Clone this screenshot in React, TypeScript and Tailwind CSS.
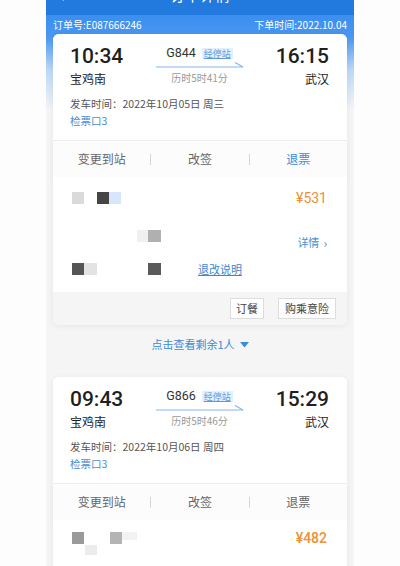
import React from "react";

const cjk = "font-['Noto_Sans_CJK_SC',sans-serif]";

type Trip = {
  dep: string;
  arr: string;
  from: string;
  to: string;
  train: string;
  duration: string;
  date: string;
  gate: string;
  refundBlue: boolean;
};

function Arrow() {
  return (
    <svg width="88" height="7" viewBox="0 0 88 7" className="block">
      <line x1="0" y1="6" x2="87" y2="6" stroke="#86b6ea" strokeWidth="1.2" />
      <line x1="87" y1="6" x2="79" y2="1.5" stroke="#86b6ea" strokeWidth="1.2" />
    </svg>
  );
}

function TripTop({ trip }: { trip: Trip }) {
  return (
    <div className="h-[106px] bg-white pl-[17px] pr-[18px] pt-[9px] rounded-t-[6px]">
      <div className="flex items-start justify-between">
        <div className="flex flex-col">
          <span className="font-['Roboto',sans-serif] text-[21px] leading-[26px] font-medium text-[#1f1f1f]">
            {trip.dep}
          </span>
          <span className={`${cjk} mt-[2px] text-[12px] leading-[16px] text-[#222]`}>{trip.from}</span>
        </div>
        <div className="flex flex-col items-center pt-[3px]">
          <div className="flex items-center gap-[6px]">
            <span className="font-['Roboto',sans-serif] text-[12.5px] leading-[14px] text-[#333]">{trip.train}</span>
            <span className={`${cjk} bg-[#e4effc] px-[2px] text-[9px] leading-[11px] text-[#5a9bdc] underline`}>
              经停站
            </span>
          </div>
          <div className="mt-[1px] -mr-[1px]">
            <Arrow />
          </div>
          <span className={`${cjk} mt-[3px] text-[10px] leading-[13px] text-[#999]`}>{trip.duration}</span>
        </div>
        <div className="flex flex-col items-end">
          <span className="font-['Roboto',sans-serif] text-[21px] leading-[26px] font-medium text-[#1f1f1f]">
            {trip.arr}
          </span>
          <span className={`${cjk} mt-[2px] text-[12px] leading-[16px] text-[#222]`}>{trip.to}</span>
        </div>
      </div>
      <div className={`${cjk} mt-[9px] text-[10.5px] leading-[16px] text-[#555]`}>发车时间：{trip.date}</div>
      <div className={`${cjk} mt-[1px] text-[10.5px] leading-[16px] text-[#4a8fd0]`}>{trip.gate}</div>
    </div>
  );
}

function ActionRow({ refundBlue }: { refundBlue: boolean }) {
  return (
    <div className={`${cjk} flex h-[37px] items-center border-t border-[#eeeeee] bg-[#fcfcfc] text-[12px] text-[#666] shadow-[0_2px_3px_rgba(0,0,0,0.04)]`}>
      <div className="flex-1 text-center">变更到站</div>
      <div className="h-[11px] w-px bg-[#d6d6d6]" />
      <div className="flex-1 text-center">改签</div>
      <div className="h-[11px] w-px bg-[#d6d6d6]" />
      <div className={`flex-1 text-center ${refundBlue ? "text-[#3b8bd6]" : ""}`}>退票</div>
    </div>
  );
}

function Block({ c, w = 12, h = 12 }: { c: string; w?: number; h?: number }) {
  return <div className={`shrink-0 ${c}`} style={{ width: w, height: h }} />;
}

function PassengerOne() {
  return (
    <>
      <div className="bg-white pl-[19px] pr-[20px] pt-[15px] pb-[17px]">
        <div className="flex h-[12px] items-center">
          <Block c="bg-[#dadada]" />
          <div className="w-[13px]" />
          <Block c="bg-[#454545]" />
          <Block c="bg-[#d6e6fb]" />
          <span className="ml-auto font-['Roboto',sans-serif] text-[14px] leading-none text-[#ee9034]">¥531</span>
        </div>
        <div className="mt-[26px] flex items-start">
          <div className="w-[65px]" />
          <Block c="bg-[#f0f0f0]" w={11} />
          <Block c="bg-[#b0b0b0]" w={13} />
          <span className={`${cjk} ml-auto mt-[6px] flex items-center gap-[4px] text-[11px] leading-[13px] text-[#4a8fd0]`}>
            详情<span className="text-[12px] leading-[12px]">›</span>
          </span>
        </div>
        <div className="mt-[14px] flex items-center">
          <Block c="bg-[#555]" />
          <Block c="bg-[#e3e3e3]" w={13} />
          <div className="w-[51px]" />
          <Block c="bg-[#5a5a5a]" w={13} />
          <span className={`${cjk} ml-[37px] text-[11px] leading-[12px] text-[#3d86cf] underline`}>退改说明</span>
        </div>
      </div>
      <div className={`${cjk} flex h-[33px] items-center justify-end gap-[14px] rounded-b-[6px] bg-[#f5f5f5] pr-[11px]`}>
        <div className="flex h-[21px] items-center border border-[#dddddd] bg-white px-[5px] text-[11px] text-[#444]">
          订餐
        </div>
        <div className="flex h-[21px] items-center border border-[#dddddd] bg-white px-[6px] text-[11px] text-[#444]">
          购乘意险
        </div>
      </div>
    </>
  );
}

function PassengerTwo() {
  return (
    <div className="bg-white pl-[19px] pr-[20px] pt-[12px] pb-[20px]">
      <div className="flex items-start">
        <div className="flex flex-col">
          <div className="flex">
            <Block c="bg-[#9a9a9a]" />
            <div className="w-[26px]" />
            <Block c="bg-[#b4b4b4]" />
            <Block c="bg-[#f2f2f2]" w={15} h={8} />
          </div>
          <div className="mt-[1px] flex">
            <div className="w-[13px]" />
            <Block c="bg-[#ececec]" h={10} />
          </div>
        </div>
        <span className="ml-auto font-['Roboto',sans-serif] text-[14px] leading-[12px] font-medium text-[#ee9034]">¥482</span>
      </div>
      <div className="mt-[13px] flex">
        <div className="w-[51px]" />
        <Block c="bg-[#8a8a8a]" />
        <Block c="bg-[#e6e6e6]" />
      </div>
    </div>
  );
}

function Card({ trip, children }: { trip: Trip; children: React.ReactNode }) {
  return (
    <div className="mx-[7px] rounded-[6px] bg-white shadow-[0_1px_6px_rgba(0,0,0,0.07)]">
      <TripTop trip={trip} />
      <ActionRow refundBlue={trip.refundBlue} />
      {children}
    </div>
  );
}

export default function App() {
  const t1: Trip = {
    dep: "10:34",
    arr: "16:15",
    from: "宝鸡南",
    to: "武汉",
    train: "G844",
    duration: "历时5时41分",
    date: "2022年10月05日 周三",
    gate: "检票口3",
    refundBlue: true,
  };
  const t2: Trip = {
    dep: "09:43",
    arr: "15:29",
    from: "宝鸡南",
    to: "武汉",
    train: "G866",
    duration: "历时5时46分",
    date: "2022年10月06日 周四",
    gate: "检票口3",
    refundBlue: false,
  };

  return (
    <div className="flex h-[566px] w-[400px] justify-center overflow-hidden bg-[#fdfdfd]">
      <div className="h-full w-[308px] bg-[#f5f5f6]">
        {/* title bar, only its bottom edge shows */}
        <div className={`${cjk} relative flex h-[15px] items-end justify-center overflow-hidden bg-[#2279de]`}>
          <span className="absolute left-[14px] bottom-[12px] text-[16px] leading-[16px] text-white">‹</span>
          <span className="mb-[12px] text-[15px] leading-[16px] text-white">订单详情</span>
        </div>

        <div className="bg-[linear-gradient(180deg,#3b8ef0_0px,#4a97f0_22px,#bcd8f8_55px,#f5f5f6_95px)]">
          <div className={`${cjk} flex h-[19px] items-center justify-between px-[7px] text-[10px] text-white`}>
            <span>订单号:E087666246</span>
            <span>下单时间:2022.10.04</span>
          </div>
          <Card trip={t1}>
            <PassengerOne />
          </Card>
        </div>

        <div className={`${cjk} flex h-[52px] items-start justify-center pt-[11px] text-[11px] leading-[16px] text-[#3d8bd6]`}>
          点击查看剩余1人
          <svg width="9" height="6" viewBox="0 0 9 6" className="ml-[5px] mt-[6px]">
            <path d="M0 0 L9 0 L4.5 5.5 Z" fill="#3d8bd6" />
          </svg>
        </div>

        <Card trip={t2}>
          <PassengerTwo />
        </Card>
      </div>
    </div>
  );
}
